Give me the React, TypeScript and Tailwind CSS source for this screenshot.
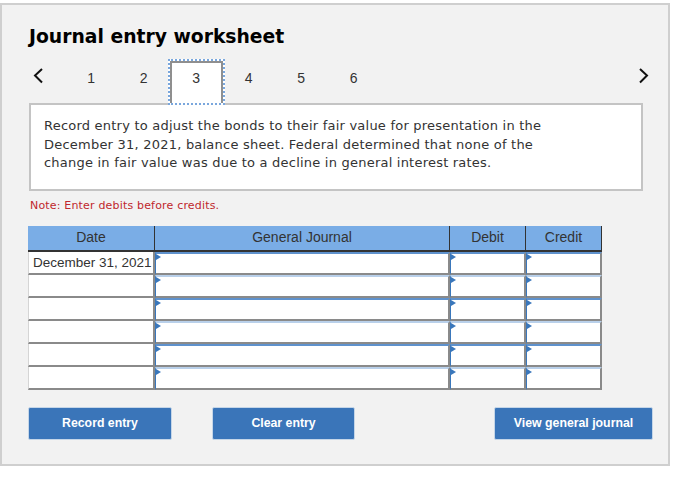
const STEPS = [1, 2, 3, 4, 5, 6];
const ROWS = ["December 31, 2021", "", "", "", "", ""];

const verdana = "font-['DejaVu_Sans',sans-serif]";
const arial = "font-['Liberation_Sans',Arial,sans-serif]";

// little blue flag in the corner of each entry cell
const Flag = () => (
  <svg className="absolute left-0 top-0" width="5" height="6" viewBox="0 0 5 6">
    <path d="M0 0 L5 3 L0 6 Z" fill="#3a77bb" />
  </svg>
);

const EntryCell = ({ dark }: { dark: boolean }) => (
  <td className={`relative p-0 bg-white border-t-2 border-l border-l-[#3a77bb] border-r-2 border-r-[#8a8a8a] border-b-2 border-b-[#8a8a8a] ${dark ? "border-t-[#5f92cd]" : "border-t-[#b9d0ea]"}`}>
    <Flag />
  </td>
);

const ActionButton = ({ label, className }: { label: string; className: string }) => (
  <button className={`h-[33px] rounded-[2px] bg-[#3a75b9] border border-[#c5d6e8] text-white text-[12.3px] font-bold ${arial} ${className}`}>
    {label}
  </button>
);

export default function App() {
  return (
    <div className="w-[692px] h-[479px] bg-white pt-[3px] overflow-hidden">
      <div className="w-[670px] h-[463px] bg-[#f2f2f2] border-2 border-[#cfcfcf] pl-[27px] pt-[17px]">
        <h1 className={`text-[18.75px] leading-[30px] font-bold text-black ${verdana}`}>Journal entry worksheet</h1>

        <div className="flex items-start h-[44px] mt-[8px] w-[626px] relative">
          <svg className="ml-[3px] mr-[22px] mt-[8px]" width="11" height="16" viewBox="0 0 11 16" fill="none">
            <path d="M10 1 L3 7.5 L10 14.5" stroke="#111" strokeWidth="2" />
          </svg>
          {STEPS.map((s) => (
            <div key={s} className={`relative w-[52.5px] h-[44px] text-center text-[14px] leading-[36px] text-[#333] ${arial}`}>
              {s === 3 && (
                <div className="absolute -left-[2px] -right-[2px] -top-[1px] h-[46px] bg-white border-2 border-dotted border-[#7aa7dd]">
                  <div className="h-full border-2 border-b-0 border-[#8f8f8f]" />
                </div>
              )}
              <span className="relative">{s}</span>
            </div>
          ))}
          <svg className="absolute right-[6px] top-[8px]" width="11" height="16" viewBox="0 0 11 16" fill="none">
            <path d="M2 1 L9 7.5 L2 14.5" stroke="#111" strokeWidth="2" />
          </svg>
        </div>

        <div className={`w-[614px] h-[88px] -mt-[1px] bg-white border-2 border-[#c4c4c4] pl-[13px] pt-[12px] text-[13px] tracking-[0.22px] leading-[18.5px] text-[#333] ${verdana}`}>
          Record entry to adjust the bonds to their fair value for presentation in the
          <br />
          December 31, 2021, balance sheet. Federal determined that none of the
          <br />
          change in fair value was due to a decline in general interest rates.
        </div>

        <p className={`mt-[7px] pl-[1px] text-[11px] tracking-[0.18px] leading-[16px] text-[#c0272d] ${verdana}`}>Note: Enter debits before credits.</p>

        <table className={`mt-[12px] table-fixed border-separate border-spacing-0 w-[574px] -ml-[1px] text-[14px] text-[#333] ${arial}`}>
          <colgroup>
            <col className="w-[127px]" />
            <col className="w-[295px]" />
            <col className="w-[76px]" />
            <col className="w-[76px]" />
          </colgroup>
          <thead>
            <tr className="h-[26px] bg-[#7aade6]">
              <th className="p-0 pb-[2px] font-normal border-r border-r-[#333] border-b-2 border-b-[#333]">Date</th>
              <th className="p-0 pb-[2px] font-normal border-r border-r-[#333] border-b-2 border-b-[#333]">General Journal</th>
              <th className="p-0 pb-[2px] font-normal border-r border-r-[#333] border-b-2 border-b-[#333]">Debit</th>
              <th className="p-0 pb-[2px] font-normal border-r border-r-[#333] border-b-2 border-b-[#333]">Credit</th>
            </tr>
          </thead>
          <tbody>
            {ROWS.map((date, i) => (
              <tr key={i} className="h-[23px]">
                <td className="p-0 pl-[4px] bg-white border-l border-l-[#d5d5d5] border-r-2 border-r-[#8a8a8a] border-b-2 border-b-[#8a8a8a] whitespace-nowrap text-[13.5px] leading-none">{date}</td>
                <EntryCell dark={i % 2 === 0} />
                <EntryCell dark={i % 2 === 0} />
                <EntryCell dark={i % 2 === 0} />
              </tr>
            ))}
          </tbody>
        </table>

        <div className="mt-[17px] flex -ml-[1px]">
          <ActionButton label="Record entry" className="w-[144px]" />
          <ActionButton label="Clear entry" className="w-[143px] ml-[40px]" />
          <ActionButton label="View general journal" className="w-[159px] ml-[139px]" />
        </div>
      </div>
    </div>
  );
}
